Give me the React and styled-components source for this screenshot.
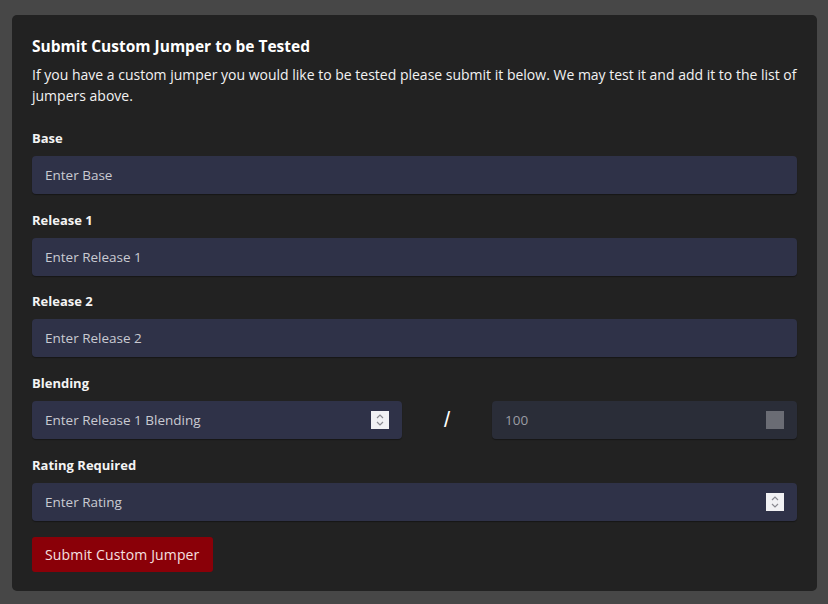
import React from "react";
import styled, { createGlobalStyle } from "styled-components";

const Global = createGlobalStyle`
  html, body { margin: 0; padding: 0; background: #474747; }
  body { font-family: "Open Sans", "Noto Sans", sans-serif; }
  * { box-sizing: border-box; }
  input::-webkit-outer-spin-button, input::-webkit-inner-spin-button { -webkit-appearance: none; margin: 0; }
`;

const Page = styled.div`
  padding: 15px 11px 12px 12px;
  min-height: 604px;
`;

const Card = styled.form`
  background: #222222;
  border-radius: 5px;
  padding: 20px 20px 19px 20px;
  display: flex;
  flex-direction: column;
`;

const Title = styled.h2`
  margin: 0;
  font-size: 15.5px;
  line-height: 22px;
  font-weight: 700;
  color: #ffffff;
`;

const Intro = styled.p`
  margin: 7px 0 0 0;
  font-size: 14px;
  line-height: 21px;
  color: #f2f2f2;
`;

const Fields = styled.div`
  margin-top: 22px;
  display: flex;
  flex-direction: column;
  gap: 15.7px;
`;

const Field = styled.div`
  display: flex;
  flex-direction: column;
  gap: 8px;
`;

const Label = styled.label`
  font-size: 13px;
  line-height: 20px;
  font-weight: 700;
  color: #f4f4f4;
`;

const InputWrap = styled.div`
  position: relative;
  flex: ${(p) => p.$flex || "1 1 auto"};
`;

const Input = styled.input`
  display: block;
  width: 100%;
  height: 38px;
  border: none;
  border-radius: 4px;
  padding: 0 13px;
  font-family: inherit;
  font-size: 13.5px;
  color: #e6e6ea;
  background: ${(p) => (p.disabled ? "#2a2d38" : "#2f3248")};
  box-shadow: 0 1px 1px rgba(0, 0, 0, 0.35);
  outline: none;
  -moz-appearance: textfield;
  &::placeholder {
    color: ${(p) => (p.disabled ? "#9a9ca4" : "#c9cad2")};
  }
`;

const Spin = styled.span`
  position: absolute;
  right: 13px;
  top: 10px;
  width: 18px;
  height: 18px;
  background: ${(p) => (p.$disabled ? "#6a6c74" : "#f1f1f3")};
  display: flex;
  align-items: center;
  justify-content: center;
  pointer-events: none;
`;

const Row = styled.div`
  display: flex;
  align-items: center;
`;

const Slash = styled.span`
  width: 90px;
  text-align: center;
  font-size: 22px;
  color: #ffffff;
  line-height: 38px;
  font-family: "Liberation Sans", sans-serif;
`;

const Submit = styled.button`
  margin-top: 16px;
  align-self: flex-start;
  height: 35px;
  padding: 0 13px;
  border: none;
  border-radius: 3px;
  background: #8a0008;
  color: #f6e0e0;
  font-family: inherit;
  font-size: 14px;
  letter-spacing: 0.15px;
`;

function Arrows() {
  return (
    <svg width="10" height="14" viewBox="0 0 10 14" fill="none" stroke="#8a8a90" strokeWidth="1.2">
      <path d="M2 5 L5 2 L8 5" />
      <path d="M2 9 L5 12 L8 9" />
    </svg>
  );
}

export default function App() {
  return (
    <>
      <Global />
      <Page>
        <Card onSubmit={(e) => e.preventDefault()}>
          <Title>Submit Custom Jumper to be Tested</Title>
          <Intro>
            If you have a custom jumper you would like to be tested please submit it below. We may test it and add it to the list of jumpers above.
          </Intro>
          <Fields>
            <Field>
              <Label>Base</Label>
              <InputWrap>
                <Input placeholder="Enter Base" />
              </InputWrap>
            </Field>
            <Field>
              <Label>Release 1</Label>
              <InputWrap>
                <Input placeholder="Enter Release 1" />
              </InputWrap>
            </Field>
            <Field>
              <Label>Release 2</Label>
              <InputWrap>
                <Input placeholder="Enter Release 2" />
              </InputWrap>
            </Field>
            <Field>
              <Label>Blending</Label>
              <Row>
                <InputWrap $flex="0 0 370px">
                  <Input type="number" placeholder="Enter Release 1 Blending" />
                  <Spin><Arrows /></Spin>
                </InputWrap>
                <Slash>/</Slash>
                <InputWrap>
                  <Input type="number" placeholder="100" disabled />
                  <Spin $disabled />
                </InputWrap>
              </Row>
            </Field>
            <Field>
              <Label>Rating Required</Label>
              <InputWrap>
                <Input type="number" placeholder="Enter Rating" />
                <Spin><Arrows /></Spin>
              </InputWrap>
            </Field>
          </Fields>
          <Submit type="submit">Submit Custom Jumper</Submit>
        </Card>
      </Page>
    </>
  );
}
